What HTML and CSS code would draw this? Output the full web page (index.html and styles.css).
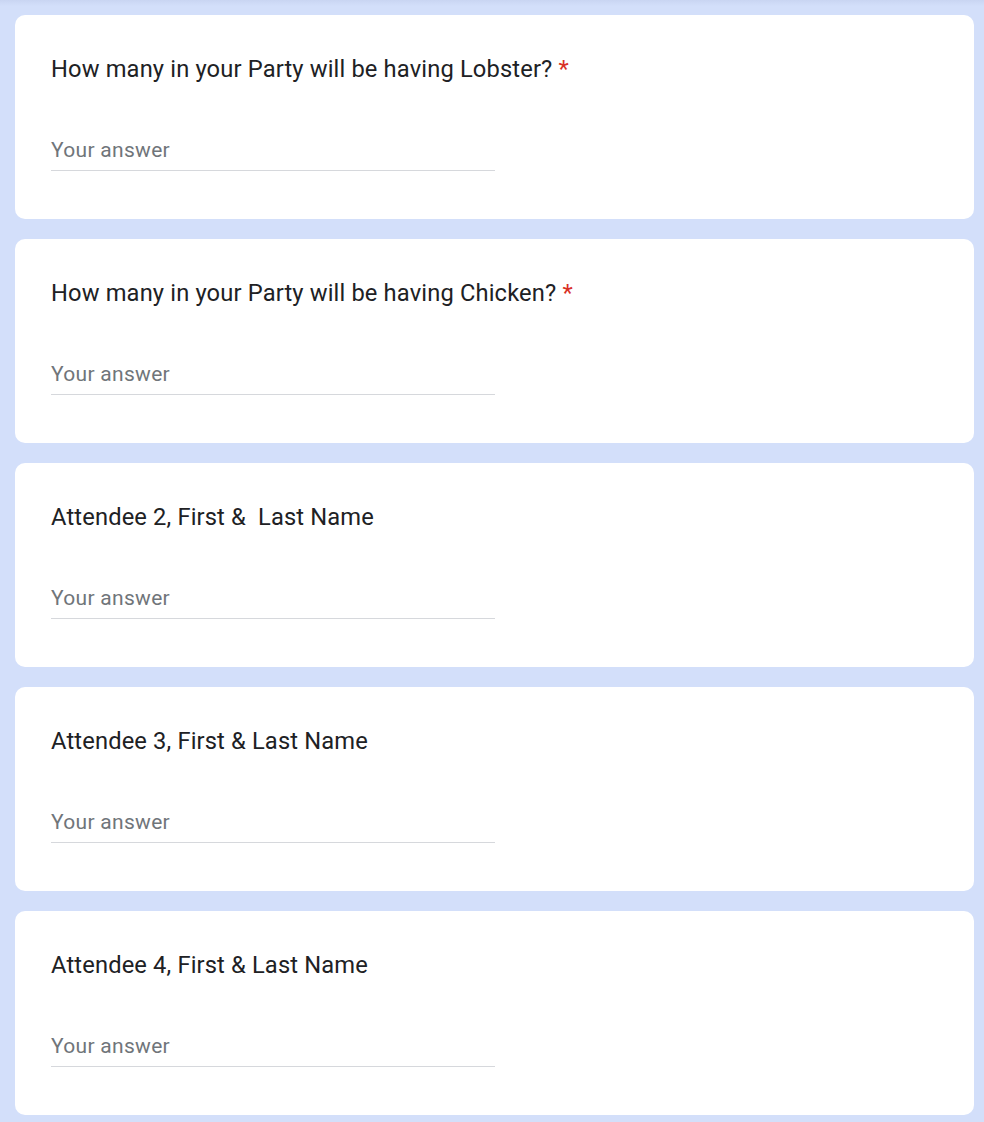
FILE: index.html
```html
<!DOCTYPE html>
<html>
<head>
<meta charset="utf-8">
<link rel="stylesheet" href="styles.css">
</head>
<body>
<div class="topshade"></div>
<main class="form">
  <section class="card">
    <div class="title">How many in your Party will be having Lobster? <span class="req">*</span></div>
    <div class="field"><span class="ph">Your answer</span></div>
  </section>
  <section class="card">
    <div class="title">How many in your Party will be having Chicken? <span class="req">*</span></div>
    <div class="field"><span class="ph">Your answer</span></div>
  </section>
  <section class="card">
    <div class="title">Attendee 2, First &amp;&nbsp; Last Name</div>
    <div class="field"><span class="ph">Your answer</span></div>
  </section>
  <section class="card">
    <div class="title">Attendee 3, First &amp; Last Name</div>
    <div class="field"><span class="ph">Your answer</span></div>
  </section>
  <section class="card">
    <div class="title">Attendee 4, First &amp; Last Name</div>
    <div class="field"><span class="ph">Your answer</span></div>
  </section>
</main>
</body>
</html>
```
FILE: styles.css
```css
html, body {
  margin: 0;
  padding: 0;
  background: #d3dffa;
  font-family: Roboto, "Liberation Sans", Arial, sans-serif;
}
body {
  position: relative;
  height: 1122px;
  overflow: hidden;
}
.topshade {
  position: absolute;
  left: 0;
  right: 0;
  top: 0;
  height: 6px;
  background: linear-gradient(#c9d5f2, #d3dffa);
}
.form {
  position: relative;
  display: flex;
  flex-direction: column;
  gap: 20px;
  padding: 15px 10px 0 15px;
}
.card {
  background: #fff;
  border-radius: 10px;
  height: 204px;
  box-sizing: border-box;
  padding: 38px 36px 0 36px;
}
.title {
  font-size: 23.7px;
  line-height: 32px;
  color: #202124;
  letter-spacing: 0.15px;
}
.req {
  color: #d93025;
}
.field {
  margin-top: 50px;
  width: 444px;
  height: 35.5px;
  box-sizing: border-box;
  border-bottom: 1.5px solid #d6d8dc;
  line-height: 30px;
}
.ph {
  font-size: 21px;
  color: #70757a;
  letter-spacing: 0.3px;
}
```
